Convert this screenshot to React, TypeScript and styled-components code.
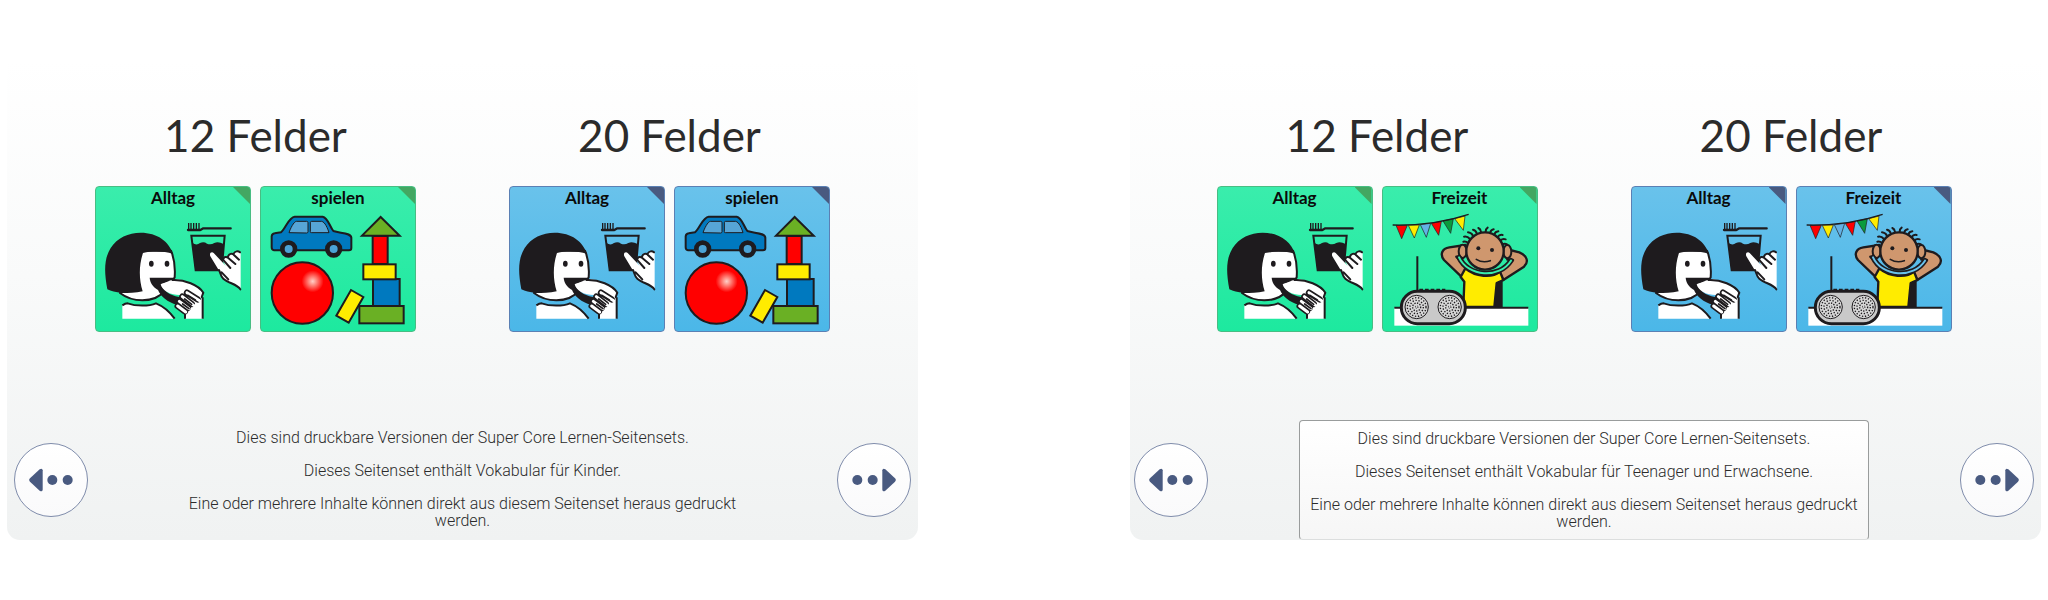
import React from "react";
import styled, { createGlobalStyle, css } from "styled-components";

type Tone = "green" | "blue";
type Picture = "Alltag" | "spielen" | "Freizeit";

const tones = {
  green: { from: "#3aedac", to: "#1de99f", edge: "#48bd83", corner: "#43a762" },
  blue: { from: "#69c2eb", to: "#4bb7e8", edge: "#5b80b4", corner: "#495a80" },
};

const INK = "#1e1b1e";

const GlobalStyle = createGlobalStyle`
  *, *::before, *::after { box-sizing: border-box; }
  body { margin: 0; background: #fff; }
  button { font: inherit; color: inherit; cursor: pointer; }
`;

const Page = styled.main`
  display: grid;
  grid-template-columns: 1fr 1fr;
  gap: 212px;
  padding: 60px 7px;
  font-family: Roboto, "Liberation Sans", sans-serif;
  color: #2b2b2b;
`;

const Panel = styled.section<{ $inset: number }>`
  display: flex;
  flex-direction: column;
  padding: 49px 7px 0 ${(p) => p.$inset}px;
  border-radius: 0 0 13px 13px;
  background: linear-gradient(#ffffff, #f9fafa 45%, #f0f2f2);
`;

const Groups = styled.div`
  display: flex;
  justify-content: center;
  gap: 93px;
`;

const Group = styled.div`
  display: flex;
  flex-direction: column;
  align-items: center;
`;

const Heading = styled.h2`
  margin: 0 0 25px;
  font-family: Lato, "Liberation Sans", sans-serif;
  font-size: 44px;
  font-weight: 400;
  line-height: 52px;
`;

const TileRow = styled.div`
  display: flex;
  gap: 9px;
`;

const Tile = styled.button<{ $tone: Tone }>`
  position: relative;
  display: flex;
  flex-direction: column;
  width: 156px;
  padding: 0;
  overflow: hidden;
  border: 1px solid ${(p) => tones[p.$tone].edge};
  border-radius: 4px;
  background: linear-gradient(${(p) => tones[p.$tone].from}, ${(p) => tones[p.$tone].to});

  &::after {
    content: "";
    position: absolute;
    top: 0;
    right: 0;
    width: 17px;
    height: 17px;
    background: ${(p) => tones[p.$tone].corner};
    clip-path: polygon(0 0, 100% 0, 100% 100%);
  }
`;

const TileLabel = styled.span`
  width: 100%;
  padding-bottom: 2px;
  font-family: Lato, "Liberation Sans", sans-serif;
  font-size: 17px;
  font-weight: 700;
  line-height: 22px;
  text-align: center;
  color: #0a0a0a;
`;

const Drawing = styled.svg`
  display: block;
  width: 100%;
  height: 120px;
`;

const Footer = styled.div`
  display: flex;
  align-items: center;
  justify-content: space-between;
  margin-top: 88px;
`;

const RoundButton = styled.button`
  display: grid;
  place-items: center;
  flex: none;
  width: 74px;
  height: 74px;
  padding: 0;
  border: 1px solid #7f8cab;
  border-radius: 50%;
  background: linear-gradient(#fff, #fafafb);
`;

const ArrowIcon = styled.svg<{ $flip: boolean }>`
  width: 44px;
  height: 24px;
  fill: #495a80;
  ${(p) => p.$flip && css`transform: scaleX(-1);`}
`;

const Note = styled.div<{ $boxed: boolean }>`
  display: flex;
  flex-direction: column;
  gap: 16px;
  width: 570px;
  min-height: 120px;
  padding: 9px 8px;
  font-size: 16px;
  font-weight: 300;
  line-height: 17px;
  text-align: center;
  ${(p) =>
    p.$boxed &&
    css`
      border: 1px solid #999c9c;
      border-bottom-color: #dcdede;
      border-radius: 4px;
      background: linear-gradient(#ffffff, #f6f6f6);
    `}
`;

const Line = styled.p`
  margin: 0;
`;

function Everyday() {
  return (
    <Drawing viewBox="21 93 462 360" aria-hidden="true">
      <g stroke={INK} strokeWidth="6" strokeLinejoin="round" fill="none">
        <path d="M100 416V375L116 370C140 379 180 379 201 370C226 380 244 398 257 416Z" fill="#fff" stroke="none" />
        <path d="M100 376C106 372 110 370 116 370C140 379 180 379 201 370C226 380 244 398 257 416" />
        <path d="M158 212H246C257 238 259 265 257 292L230 330C212 352 188 361 160 361C132 361 110 352 93 339Z" fill="#fff" />
        <path d="M55 328C45 275 45 236 65 204C85 173 118 158 155 158C205 158 240 184 252 222C224 213 190 213 162 219C150 255 149 296 161 334C140 339 118 339 98 339C80 337 66 334 55 328Z" fill={INK} stroke="none" />
        <path d="M182 293H253V303L216 312C226 338 250 350 282 352L264 374C236 368 214 348 207 330C191 320 183 308 182 293Z" fill={INK} stroke="none" />
        <path d="M215 313C228 310 244 298 264 298C298 302 334 322 343 342L336 356L300 340C270 352 222 342 215 313Z" fill="#fff" stroke="none" />
        <path d="M248 300C286 297 330 316 343 338L337 354" />
        <path d="M288 416V386L298 345L322 336L342 360V416Z" fill="#fff" stroke="none" />
        <path d="M288 416V398M341 416V352" />
        <g strokeLinecap="round">
          <path d="M266 378L288 394M271 364L296 384M280 350L308 372M294 338L326 358" strokeWidth="19" />
          <path d="M266 378L290 396M271 364L300 386M280 350L314 376M294 338L332 362" stroke="#fff" strokeWidth="9" />
          <path d="M281 372L300 386M287 357L308 373M296 346L319 360" strokeWidth="5" />
        </g>
      </g>
      <ellipse cx="187" cy="251" rx="7" ry="9" fill={INK} />
      <ellipse cx="234" cy="251" rx="7" ry="9" fill={INK} />
      <g fill="none" stroke={INK}>
        <path d="M299 129V150M306 129V150M314 129V150M322 129V150M330 129V150" strokeWidth="4" />
        <path d="M297 150H334L343 145H425" strokeWidth="7" strokeLinejoin="round" strokeLinecap="round" />
        <path d="M307 167H407L398 271H320Z" strokeWidth="6" />
      </g>
      <path d="M310 188Q322 198 333 189Q345 184 354 191Q365 196 376 189Q388 184 404 192L399 273H319Z" fill={INK} />
      <path d="M374 219L410 257L402 242C400 232 410 228 417 233C416 222 426 218 434 224C434 214 446 210 455 217V330C445 312 418 310 402 294C396 285 396 278 389 270L364 229C360 219 368 214 374 219Z" fill="#fff" />
      <g fill="none" stroke={INK} strokeWidth="6" strokeLinecap="round">
        <path d="M390 270C395 280 394 288 403 296C418 310 444 312 454 328M398 277L418 298" />
        <path d="M402 239L424 264M402 239C404 230 412 229 417 233L439 252M417 230C420 221 429 219 434 224L450 239M434 221C438 213 447 212 453 217" />
      </g>
    </Drawing>
  );
}

function Play() {
  return (
    <Drawing viewBox="21 93 462 360" aria-hidden="true">
      <defs>
        <radialGradient id="shine">
          <stop offset="0" stopColor="#ffd0c8" />
          <stop offset="0.35" stopColor="#ff8a80" />
          <stop offset="1" stopColor="#ff0000" />
        </radialGradient>
      </defs>
      <g stroke={INK} strokeWidth="6" strokeLinejoin="round">
        <path d="M62 160L81 157C97 142 104 112 122 110H206C222 113 226 138 238 153C258 160 291 158 292 173V204Q292 211 285 211H60Q53 210 53 202V169Q54 161 62 160Z" fill="#0079bf" />
        <g fill="#57a5d6" strokeWidth="3">
          <path d="M105 158C109 146 119 125 127 124H158Q162 124 162 128V155Q162 159 158 159Z" />
          <path d="M169 128Q169 124 173 124H203C213 126 221 145 225 158H173Q169 159 169 155Z" />
        </g>
        <circle cx="104" cy="207" r="19" fill="#4ba3d5" strokeWidth="14" />
        <circle cx="239" cy="207" r="19" fill="#4ba3d5" strokeWidth="14" />
        <circle cx="145" cy="339" r="92" fill="#ff0000" />
        <circle cx="176" cy="304" r="33" fill="url(#shine)" stroke="none" />
        <g strokeLinejoin="miter">
          <rect x="356" y="168" width="45" height="84" fill="#ff0000" />
          <path d="M380 111L437 167H324Z" fill="#6ab024" />
          <rect x="357" y="297" width="80" height="81" fill="#0079bf" />
          <rect x="328" y="253" width="97" height="45" fill="#ffec00" />
          <path d="M291 330L328 351L284 428L247 407Z" fill="#ffec00" />
          <rect x="316" y="378" width="133" height="52" fill="#6ab024" />
        </g>
      </g>
    </Drawing>
  );
}

function Speaker({ cx }: { cx: number }) {
  return (
    <g fill="none" stroke={INK}>
      <circle cx={cx} cy="382" r="35" fill="#d8d8d8" strokeWidth="3" />
      <circle cx={cx} cy="382" r="28" strokeWidth="4" strokeDasharray="4 5" />
      <circle cx={cx} cy="382" r="20" strokeWidth="4" strokeDasharray="4 5" />
      <circle cx={cx} cy="382" r="12" strokeWidth="4" strokeDasharray="4 4" />
      <circle cx={cx} cy="382" r="4" strokeWidth="3" strokeDasharray="3 3" />
    </g>
  );
}

function Leisure({ tone }: { tone: Tone }) {
  const skin = "#cf976e";
  return (
    <Drawing viewBox="23 94 462 360" aria-hidden="true">
      <g stroke={INK} strokeWidth="2" strokeLinejoin="round">
        <path d="M62 137H96L79 177Z" fill="#ff0000" />
        <path d="M99 137L132 136L117 175Z" fill="#ffec00" />
        <path d="M135 135L166 131L153 173Z" fill="#63b1e5" />
        <path d="M168 131L198 125L190 167Z" fill="#ff0000" />
        <path d="M203 124L234 117L226 161Z" fill="#0a9b3c" />
        <path d="M238 117L269 109L264 152Z" fill="#ffec00" />
        <path d="M52 136C130 138 200 130 280 104" fill="none" strokeWidth="4" />
      </g>
      <g stroke={INK} strokeWidth="7" strokeLinejoin="round" strokeLinecap="round">
        <path d="M365 300L382 292V384H357Z" fill={INK} stroke="none" />
        <path d="M270 196L222 203C200 206 193 225 206 241L258 291L276 268L243 231L262 236Z" fill={skin} />
        <path d="M392 208L432 218C456 228 461 247 446 261L384 301L372 275L413 241L396 240Z" fill={skin} />
        <ellipse cx="262" cy="215" rx="12" ry="20" fill={skin} strokeWidth="6" />
        <ellipse cx="396" cy="216" rx="12" ry="20" fill={skin} strokeWidth="6" />
        <path d="M270 266C300 292 350 296 374 276L384 301L364 310L357 382H264L267 306L256 292Z" fill="#ffec00" />
        <path d="M251 233C278 292 372 298 407 243" fill="none" strokeWidth="16" />
        <path d="M251 233C278 292 372 298 407 243" fill="none" stroke={tones[tone].from} strokeWidth="6" />
        <path
          d="M279 190Q271 184 264 186M284 178Q276 169 266 171M293 168Q288 159 278 158M304 161Q302 152 293 150M317 157Q316 148 309 145M331 156Q331 148 337 144M345 158Q347 150 355 149M357 164Q360 156 369 155M367 172Q372 164 382 166M375 183Q382 176 391 179M380 195Q388 190 396 195"
          fill="none"
          strokeWidth="6"
        />
        <circle cx="329" cy="214" r="56" fill={skin} />
        <path d="M303 239Q322 251 345 243" fill="none" strokeWidth="5" />
      </g>
      <circle cx="309" cy="206" r="6" fill={INK} />
      <circle cx="350" cy="211" r="6" fill={INK} />
      <rect x="57" y="384" width="402" height="54" fill="#fff" />
      <path d="M57 384H459" stroke={INK} strokeWidth="6" />
      <path d="M126 230V332" stroke={INK} strokeWidth="6" />
      <path d="M132 331H210" stroke={INK} strokeWidth="8" strokeDasharray="11 6" />
      <rect x="78" y="335" width="192" height="97" rx="48" fill="#c9c9c9" stroke={INK} strokeWidth="9" />
      <Speaker cx={124} />
      <Speaker cx={223} />
    </Drawing>
  );
}

function PictureTile({ name, tone }: { name: Picture; tone: Tone }) {
  return (
    <Tile type="button" $tone={tone}>
      <TileLabel>{name}</TileLabel>
      {name === "Alltag" && <Everyday />}
      {name === "spielen" && <Play />}
      {name === "Freizeit" && <Leisure tone={tone} />}
    </Tile>
  );
}

function NavButton({ label, forward = false }: { label: string; forward?: boolean }) {
  return (
    <RoundButton type="button" aria-label={label}>
      <ArrowIcon $flip={forward} viewBox="0 0 132 72" aria-hidden="true">
        <path d="M3 31L32 4Q40 -1 41 7V65Q40 73 32 68L3 41Q-2 36 3 31Z" />
        <circle cx="70" cy="36" r="15" />
        <circle cx="116" cy="36" r="15" />
      </ArrowIcon>
    </RoundButton>
  );
}

interface PageSetProps {
  pictures: Picture[];
  audience: string;
  boxed?: boolean;
}

function PageSet({ pictures, audience, boxed = false }: PageSetProps) {
  const groups: { title: string; tone: Tone }[] = [
    { title: "12 Felder", tone: "green" },
    { title: "20 Felder", tone: "blue" },
  ];
  return (
    <Panel $inset={boxed ? 4 : 7}>
      <Groups>
        {groups.map((group) => (
          <Group key={group.title}>
            <Heading>{group.title}</Heading>
            <TileRow>
              {pictures.map((name) => (
                <PictureTile key={name} name={name} tone={group.tone} />
              ))}
            </TileRow>
          </Group>
        ))}
      </Groups>
      <Footer>
        <NavButton label="Zurück" />
        <Note $boxed={boxed}>
          <Line>Dies sind druckbare Versionen der Super Core Lernen-Seitensets.</Line>
          <Line>Dieses Seitenset enthält Vokabular für {audience}.</Line>
          <Line>Eine oder mehrere Inhalte können direkt aus diesem Seitenset heraus gedruckt werden.</Line>
        </Note>
        <NavButton label="Weiter" forward />
      </Footer>
    </Panel>
  );
}

export default function App() {
  return (
    <>
      <GlobalStyle />
      <Page>
        <PageSet pictures={["Alltag", "spielen"]} audience="Kinder" />
        <PageSet pictures={["Alltag", "Freizeit"]} audience="Teenager und Erwachsene" boxed />
      </Page>
    </>
  );
}
